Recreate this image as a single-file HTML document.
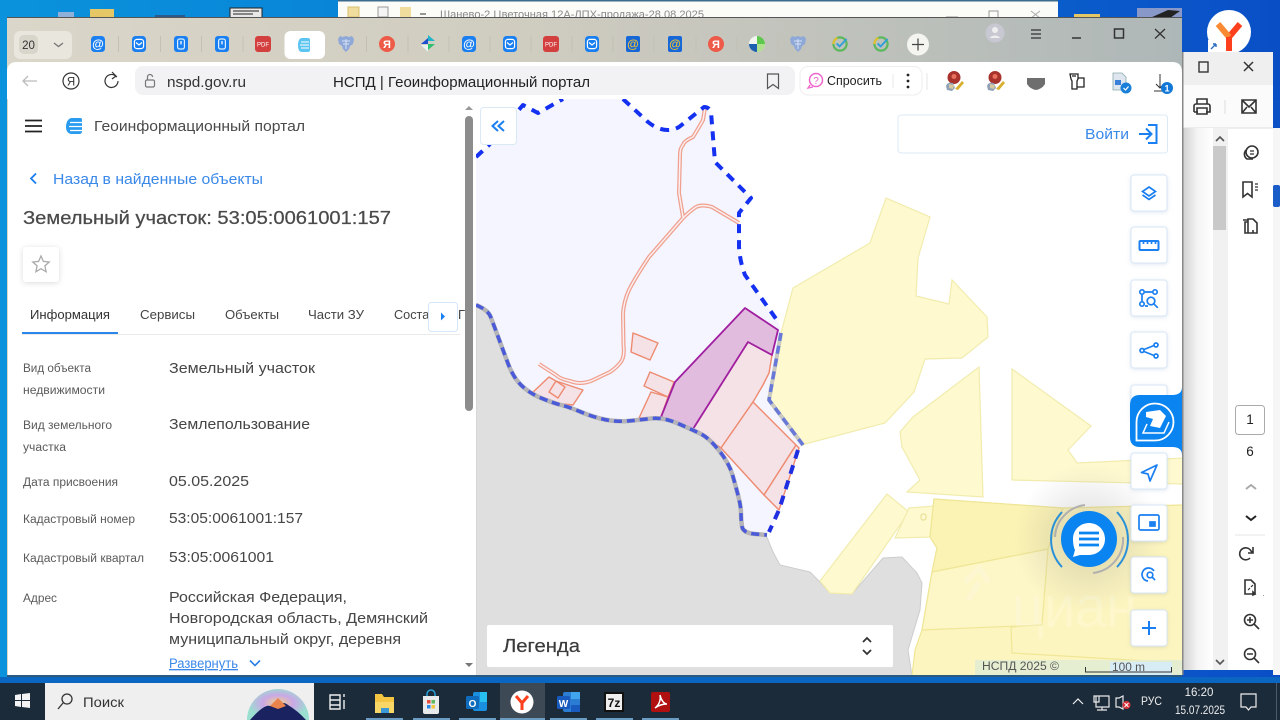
<!DOCTYPE html>
<html lang="ru"><head><meta charset="utf-8"><title>НСПД | Геоинформационный портал</title>
<style>
html,body{margin:0;padding:0;width:1280px;height:720px;overflow:hidden;background:#0a55c8}
svg{position:absolute;left:0;top:0;display:block}
text{font-family:"Liberation Sans","Noto Sans CJK SC",sans-serif}
</style></head><body>
<svg width="1280" height="720" viewBox="0 0 1280 720" xmlns="http://www.w3.org/2000/svg">
<defs>
<linearGradient id="desk" x1="0" x2="1" y1="0" y2="0"><stop offset="0" stop-color="#0a93dc"/><stop offset=".5" stop-color="#0878d4"/><stop offset="1" stop-color="#0a4ec6"/></linearGradient>
<linearGradient id="strip" x1="0" x2="1" y1="0" y2="0"><stop offset="0" stop-color="#dad6c9"/><stop offset=".45" stop-color="#cfccc0"/><stop offset="1" stop-color="#aeb7b7"/></linearGradient>
<linearGradient id="shade" x1="0" x2="1" y1="0" y2="0"><stop offset="0" stop-color="#cfcfcf"/><stop offset=".5" stop-color="#f4f4f4"/><stop offset="1" stop-color="#fff"/></linearGradient>
<radialGradient id="glow"><stop offset="0" stop-color="#777" stop-opacity=".28"/><stop offset=".55" stop-color="#888" stop-opacity=".14"/><stop offset="1" stop-color="#999" stop-opacity="0"/></radialGradient>
<radialGradient id="rainbow" cx=".5" cy=".45"><stop offset="0" stop-color="#f4d28a"/><stop offset=".5" stop-color="#c9a8e6"/><stop offset="1" stop-color="#9adfd0"/></radialGradient>
<symbol id="at" viewBox="0 0 14 16"><rect width="14" height="16" rx="3.5" fill="#1a7ff0"/><text x="7" y="12" font-size="12" font-weight="bold" fill="#fff" text-anchor="middle">@</text></symbol>
<symbol id="atg" viewBox="0 0 14 16"><rect width="14" height="16" rx="2" fill="#1668d8"/><text x="7" y="12" font-size="12" font-weight="bold" fill="#f2c02e" text-anchor="middle">@</text></symbol>
<symbol id="mail" viewBox="0 0 14 16"><rect width="14" height="16" rx="3.5" fill="#1a7ff0"/><rect x="2.4" y="3.400" width="9.200" height="9.200" rx="2.500" fill="none" stroke="#fff" stroke-width="1.200"/><path d="M4 6.500L7 9l3-2.500" fill="none" stroke="#fff" stroke-width="1.200"/></symbol>
<symbol id="excl" viewBox="0 0 14 16"><rect width="14" height="16" rx="3" fill="#1a7ff0"/><rect x="3.600" y="3" width="6.800" height="10" rx="2" fill="none" stroke="#dff0ff" stroke-width="1.200"/><path d="M7 5v3.400" stroke="#fff" stroke-width="1.300"/></symbol>
<symbol id="pdf" viewBox="0 0 16 16"><rect width="16" height="16" rx="3" fill="#d33f3f"/><text x="8" y="10.500" font-size="6" fill="#fff" text-anchor="middle">PDF</text></symbol>
<symbol id="ya" viewBox="0 0 16 16"><circle cx="8" cy="8" r="8" fill="#ee5a48"/><text x="8" y="12" font-size="11" font-weight="bold" fill="#fff" text-anchor="middle">Я</text></symbol>
<symbol id="star4" viewBox="0 0 16 18"><path d="M8 0L15 6H8z" fill="#20b4c8"/><path d="M8 9L1 9 8 3z" fill="#1c4fd0"/><path d="M8 9h7L8 15z" fill="#2cc070"/><path d="M1 10h7v7z" fill="#e8f2ee"/></symbol>
<symbol id="pie" viewBox="0 0 16 18"><circle cx="8" cy="9" r="8" fill="#f2f4f0"/><path d="M8 9V1a8 8 0 0 1 8 8z" fill="#5fc74e"/><path d="M8 9H0a8 8 0 0 0 8 8z" fill="#1c5fb0"/><path d="M8 9h8a8 8 0 0 1-8 8z" fill="#aee08e"/></symbol>
<symbol id="eagle" viewBox="0 0 16 18"><path d="M5 2l3-1 3 1 3-1 2 3-1 5-3 2-1 3-3 3-3-3-1-3-3-2L0 4l2-3z" fill="#8ea8d8"/><path d="M8 4v10M4 6h8M5 9h6" stroke="#d8e2f4" stroke-width="1"/></symbol>
<symbol id="chk" viewBox="0 0 16 18"><circle cx="8" cy="9" r="6.600" fill="none" stroke="#5cb85c" stroke-width="2.200"/><path d="M1.400 9a6.600 6.600 0 0 1 4-6" fill="none" stroke="#e0c030" stroke-width="2.200"/><path d="M4.600 8.400l3 3 7-7.400" fill="none" stroke="#2f9fd8" stroke-width="1.900"/></symbol>
<symbol id="fig" viewBox="0 0 20 20"><circle cx="10" cy="6.500" r="6.500" fill="#a8322c"/><circle cx="10" cy="5.500" r="2.500" fill="#e8705c"/><path d="M2 15q1-4 7-3l2 5-3 3-5-1z" fill="#8ea0b8"/><path d="M11 18l7-8 2 2-6 7z" fill="#d8b030"/><path d="M5 13l5 1-1 4-4-1z" fill="#d8c8a0"/></symbol>
</defs>

<!-- desktop -->
<rect width="1280" height="720" fill="url(#desk)"/>
<rect x="90" y="9" width="24" height="9" fill="#e6c766"/>
<rect x="58" y="12" width="16" height="6" fill="#8fb0d8"/>
<rect x="155" y="15" width="30" height="3" fill="#2a5a8c"/>
<rect x="230" y="8" width="32" height="10" fill="#e8e8e8" stroke="#222"/>
<path d="M233 11h26M233 14h20" stroke="#222"/>
<rect x="1137" y="8" width="45" height="10" fill="#8898c8"/><path d="M1150 18l18-8 12 1-10 7z" fill="#222"/>
<rect x="1074" y="14" width="26" height="5" fill="#e6c766"/>
<circle cx="1229" cy="32" r="22" fill="#fff"/>
<path d="M1229 37l11-13" stroke="#fc3f1d" stroke-width="6"/><path d="M1218 24l11 13" stroke="#f98a33" stroke-width="6"/><path d="M1229 37v14" stroke="#fc3f1d" stroke-width="6"/>
<rect x="1208" y="40" width="12" height="12" fill="#fff"/><path d="M1211 49l5-5m0 0h-3m3 0v3" stroke="#2a6fc0" stroke-width="1.400" fill="none"/>

<!-- doc window behind -->
<rect x="338" y="0" width="720" height="17" fill="#fbfbf8"/><rect x="338" y="0" width="720" height="1.500" fill="#3a6a8c"/>
<rect x="348" y="7" width="11" height="10" fill="#f0dc9c" stroke="#d8c070"/><rect x="378" y="7" width="10" height="10" fill="#f4f4f4" stroke="#999"/><rect x="400" y="7" width="11" height="10" fill="#f0dc9c"/>
<path d="M420 14h6" stroke="#333"/>
<text x="440" y="18" font-size="11" fill="#8a8a8a" textLength="264" lengthAdjust="spacingAndGlyphs">Шанево-2 Цветочная 12А-ЛПХ-продажа-28.08.2025</text>
<path d="M946 17h12" stroke="#999"/><rect x="989" y="11" width="9" height="7" fill="none" stroke="#999"/><path d="M1031 11l9 7m0-7l-9 7" stroke="#aaa"/>

<!-- right pdf window -->
<rect x="1273" y="128" width="7" height="547" fill="#f6f6f6"/><rect x="1273" y="185" width="7" height="22" rx="2" fill="#1a5cc8"/><rect x="1273" y="100" width="7" height="28" fill="#0c50c6"/>
<rect x="1182" y="52" width="91" height="618" fill="#fff"/>
<rect x="1182" y="52" width="91" height="33" fill="#efefef"/>
<rect x="1199" y="62" width="9" height="10" fill="none" stroke="#333" stroke-width="1.400"/>
<path d="M1244 62l9 9m0-9l-9 9" stroke="#333" stroke-width="1.500"/>
<rect x="1182" y="85" width="91" height="43" fill="#fbfbfb"/><path d="M1182 128h91" stroke="#dcdcdc"/>
<rect x="1182" y="128" width="31" height="542" fill="url(#shade)"/>
<rect x="1213" y="128" width="15" height="542" fill="#f1f1f1"/>
<rect x="1213" y="146" width="13" height="84" fill="#c9c9c9"/>
<path d="M1216 141l4-4 4 4M1216 660l4 4 4-4" fill="none" stroke="#555" stroke-width="1.600"/>
<path d="M1225 100v14" stroke="#ddd"/>
<g fill="none" stroke="#333" stroke-width="1.600">
<path d="M1197 104v-5h10v5M1194 112v-6a2 2 0 0 1 2-2h12a2 2 0 0 1 2 2v6h-4M1198 112h-4M1197 108h10v6h-10z"/>
<path d="M1242 100h14v13h-14zM1242 100l7 7 7-7M1242 113l5-6M1256 113l-5-6"/>
<circle cx="1252" cy="152" r="6"/><path d="M1246 150a6 6 0 0 0 1 9h6"/><path d="M1250 151h4M1250 154h4" stroke-width="1.200"/>
<path d="M1243 182h9v15l-4.500-3.500-4.500 3.500z"/><path d="M1255 184h3M1255 187h3M1255 190h3" stroke-width="1.200"/>
<path d="M1243 220h5v2h-3v11h8v-3M1248 219h5l4 4v10h-9z"/>
<path d="M1250 558a6 6 0 1 1 1-7l2 2M1253 547v6h-5"/>
<path d="M1245 580h6l4 4v10h-10z"/><path d="M1253 592l2 2-2 1z" fill="#333"/>
<path d="M1248 590l2-2m1-1l2-2" stroke-width="1.200"/>
<circle cx="1250" cy="620" r="5.500"/><path d="M1254 624l5 5M1247 620h6M1250 617v6"/>
<circle cx="1250" cy="654" r="5.500"/><path d="M1254 658l5 5M1247 654h6"/>
</g>
<rect x="1235.500" y="405.500" width="29" height="29" rx="3" fill="#fff" stroke="#aaa"/>
<text x="1250" y="424" font-size="13.500" fill="#222" text-anchor="middle">1</text>
<text x="1250" y="456" font-size="13.500" fill="#222" text-anchor="middle">6</text>
<path d="M1246 489l5-4 5 4" fill="none" stroke="#aaa" stroke-width="2"/>
<path d="M1246 516l5 4 5-4" fill="none" stroke="#222" stroke-width="2"/>
<path d="M1235 535h30" stroke="#e4e4e4"/>
<path d="M1263 596v-1h1z" fill="#333"/>

<!-- main browser window -->
<rect x="7" y="17" width="1175" height="658" fill="url(#strip)"/>
<rect x="7" y="17" width="1175" height="1" fill="#555"/>
<rect x="1182" y="52" width="1.500" height="623" fill="#888"/>

<!-- tab counter -->
<rect x="14" y="31" width="58" height="28" rx="6" fill="#e8e6dd"/>
<rect x="19" y="35" width="19" height="19" rx="5" fill="#d8d5cb"/>
<text x="28.500" y="49" font-size="11.500" fill="#333" text-anchor="middle">20</text>
<path d="M54 43l4.500 3.500 4.500-3.500" fill="none" stroke="#777" stroke-width="1.300"/>
<rect x="284.500" y="31" width="40.500" height="28" rx="6" fill="#fff"/>
<g stroke="#c3c1b6"><path d="M118.500 36v16M160.500 36v16M201.500 36v16M243 36v16M366.500 36v16M408 36v16M449 36v16M490 36v16M531 36v16M572 36v16M613 36v16M654 36v16M696 36v16M737 36v16M778 36v16M819 36v16M861 36v16M902 36v16" /></g>
<use href="#at" x="91" y="36" width="14" height="16"/>
<use href="#mail" x="132" y="36" width="14" height="16"/>
<use href="#excl" x="174" y="36" width="14" height="16"/>
<use href="#excl" x="215" y="36" width="14" height="16"/>
<use href="#pdf" x="255" y="36" width="16" height="16"/>
<path d="M302 38h6c1.500 0 2 1 2 2v10c0 1.500-1 2-2 2h-6c-3 0-4-3-4-7 0-5 2-7 4-7z" fill="#5cc4f0"/><path d="M301 42h8M300 45h9M301 48h8" stroke="#fff"/>
<use href="#eagle" x="338" y="35" width="16" height="18"/>
<use href="#ya" x="379" y="36" width="16" height="16"/>
<use href="#star4" x="420" y="35" width="16" height="18"/>
<use href="#at" x="462" y="36" width="14" height="16"/>
<use href="#mail" x="503" y="36" width="14" height="16"/>
<use href="#pdf" x="543" y="36" width="16" height="16"/>
<use href="#mail" x="585" y="36" width="14" height="16"/>
<use href="#atg" x="626" y="36" width="14" height="16"/>
<use href="#atg" x="668" y="36" width="14" height="16"/>
<use href="#ya" x="708" y="36" width="16" height="16"/>
<use href="#pie" x="749" y="35" width="16" height="18"/>
<use href="#eagle" x="790" y="35" width="16" height="18"/>
<use href="#chk" x="832" y="35" width="16" height="18"/>
<use href="#chk" x="873" y="35" width="16" height="18"/>
<circle cx="918" cy="44.500" r="11" fill="#f4f4f0"/><path d="M912 44.500h12M918 38.500v12" stroke="#444" stroke-width="1.200"/>
<!-- window controls -->
<circle cx="995" cy="33" r="9.500" fill="#c8c8d2"/><circle cx="995" cy="30" r="3" fill="#eee"/><path d="M989.500 38q5.500-5 11 0z" fill="#eee"/>
<path d="M1031 30h10M1031 34h10M1031 38h10" stroke="#333" stroke-width="1.200"/>
<path d="M1072 38h9" stroke="#555" stroke-width="2"/>
<rect x="1114.500" y="29" width="9" height="9" fill="none" stroke="#333" stroke-width="1.500"/>
<path d="M1155 29l10 9.500m0-9.500l-10 9.500" stroke="#333" stroke-width="1.300"/>

<!-- toolbar -->
<path d="M7 72q0-10 10-10h1155q10 0 10 10v27H7z" fill="#fff"/>
<path d="M37 81H23m5-5l-5 5 5 5" fill="none" stroke="#bbb" stroke-width="1.300"/>
<circle cx="71" cy="81" r="8" fill="none" stroke="#333" stroke-width="1.200"/><text x="71" y="85.500" font-size="11.500" fill="#333" text-anchor="middle">Я</text>
<path d="M118 81a6.500 6.500 0 1 1-3-5.500l2 1.500M112 72l4 4-4 3" fill="none" stroke="#333" stroke-width="1.200"/>
<rect x="135" y="66" width="660" height="29" rx="8" fill="#f2f2f4"/>
<rect x="145.500" y="80" width="9" height="7" rx="1.500" fill="none" stroke="#777" stroke-width="1.200"/><path d="M147.500 80v-3a2.500 2.500 0 0 1 5 0" fill="none" stroke="#777" stroke-width="1.200"/>
<text x="167" y="87" font-size="15" fill="#333" textLength="79" lengthAdjust="spacingAndGlyphs">nspd.gov.ru</text>
<text x="333" y="87" font-size="14.500" fill="#222" textLength="257" lengthAdjust="spacingAndGlyphs">НСПД | Геоинформационный портал</text>
<path d="M767.500 74h11v14.500l-5.500-4-5.500 4z" fill="none" stroke="#555" stroke-width="1.200"/>
<rect x="800" y="66.500" width="122" height="28.500" rx="8" fill="#fff" stroke="#eee"/>
<circle cx="816" cy="80" r="6.500" fill="#fff" stroke="#ee66cc" stroke-width="1.500"/><path d="M810 85l-2 3 5-1" fill="none" stroke="#ee66cc" stroke-width="1.300"/><text x="816" y="84" font-size="10" fill="#e060c0" text-anchor="middle">?</text>
<text x="827" y="85" font-size="12.500" fill="#222" textLength="55" lengthAdjust="spacingAndGlyphs">Спросить</text>
<path d="M893 74v14" stroke="#e8e8e8"/>
<circle cx="908" cy="75" r="1.400" fill="#222"/><circle cx="908" cy="81" r="1.400" fill="#222"/><circle cx="908" cy="87" r="1.400" fill="#222"/>
<path d="M927 73v17" stroke="#e6e6e6"/>
<use href="#fig" x="944" y="71" width="20" height="20"/>
<use href="#fig" x="985" y="71" width="20" height="20"/>
<path d="M1027 78h18v6q-3 5-9 6-6-1-9-6z" fill="#6e6e6e"/>
<g fill="none" stroke="#222" stroke-width="1.300"><path d="M1070 74h8v5l-1 2v8h-5v-8l-1-2zM1078 78h6v9h-7M1072 76h4"/></g>
<path d="M1113 73h9l4 4v13h-13z" fill="#dfe6f0" stroke="#8aa" stroke-width=".8"/><path d="M1115 80h6v5h-6z" fill="#3a7fd8"/>
<circle cx="1126" cy="88" r="5.500" fill="#1a7fd8"/><path d="M1123.500 88l2 2 3-3.500" fill="none" stroke="#fff" stroke-width="1.200"/>
<path d="M1160 74v13m-4-3l4 4 4-4M1154 91h8" fill="none" stroke="#333" stroke-width="1"/>
<circle cx="1167" cy="88" r="6" fill="#1278d8"/><text x="1167" y="91.500" font-size="9" font-weight="bold" fill="#fff" text-anchor="middle">1</text>

<!-- left panel -->
<rect x="8" y="99" width="468" height="576" fill="#fff"/>
<path d="M25 120.500h17M25 126h17M25 131.500h17" stroke="#222" stroke-width="1.800"/>
<path d="M72 118h8c2 0 2 1 2 3v10c0 2-1 3-3 3h-7c-4 0-6-3-6-7 0-6 3-9 6-9z" fill="#2a9cf0"/><path d="M70 122.500h12M69 126.500h13M70 130.500h12" stroke="#fff" stroke-width="1.200"/>
<text x="94" y="131" font-size="15" fill="#4a4a4a" textLength="211" lengthAdjust="spacingAndGlyphs">Геоинформационный портал</text>
<path d="M36 173.500l-5 5 5 5" fill="none" stroke="#1a7ff0" stroke-width="1.800"/>
<text x="53" y="184" font-size="15" fill="#3a88e8" textLength="210" lengthAdjust="spacingAndGlyphs">Назад в найденные объекты</text>
<text x="23" y="224" font-size="18.500" fill="#4a4a4a" stroke="#4a4a4a" stroke-width=".25" textLength="368" lengthAdjust="spacingAndGlyphs">Земельный участок: 53:05:0061001:157</text>
<rect x="23" y="247" width="36" height="35" rx="3" fill="#fff" style="filter:drop-shadow(0 1px 3px rgba(0,0,0,.14))"/>
<path d="M41 256l2.400 5.400 5.800.6-4.300 3.900 1.200 5.800-5.100-3-5.100 3 1.200-5.800-4.300-3.900 5.800-.6z" fill="none" stroke="#aaa" stroke-width="1.300"/>
<g font-size="13" fill="#444">
<text x="30" y="319" fill="#333" textLength="80" lengthAdjust="spacingAndGlyphs">Информация</text>
<text x="140" y="319" textLength="55" lengthAdjust="spacingAndGlyphs">Сервисы</text>
<text x="225" y="319" textLength="54" lengthAdjust="spacingAndGlyphs">Объекты</text>
<text x="308" y="319" textLength="56" lengthAdjust="spacingAndGlyphs">Части ЗУ</text>
<text x="394" y="319" textLength="42" lengthAdjust="spacingAndGlyphs">Состав</text>
<text x="458" y="319">Г</text>
</g>
<rect x="22" y="334" width="438" height="1" fill="#eaeaea"/>
<rect x="22" y="332" width="96" height="2" fill="#2a86e8"/>
<rect x="428.500" y="302.500" width="29" height="29" rx="3" fill="#fff" stroke="#d5e6f8"/>
<path d="M441 312.500l4 4-4 4z" fill="#1a7ff0"/>
<g font-size="11.500" fill="#5a5a5a">
<text x="23" y="372" textLength="68" lengthAdjust="spacingAndGlyphs">Вид объекта</text>
<text x="23" y="394" textLength="82" lengthAdjust="spacingAndGlyphs">недвижимости</text>
<text x="23" y="429" textLength="89" lengthAdjust="spacingAndGlyphs">Вид земельного</text>
<text x="23" y="451" textLength="43" lengthAdjust="spacingAndGlyphs">участка</text>
<text x="23" y="486" textLength="95" lengthAdjust="spacingAndGlyphs">Дата присвоения</text>
<text x="23" y="523" textLength="112" lengthAdjust="spacingAndGlyphs">Кадастровый номер</text>
<text x="23" y="562" textLength="121" lengthAdjust="spacingAndGlyphs">Кадастровый квартал</text>
<text x="23" y="602" textLength="34" lengthAdjust="spacingAndGlyphs">Адрес</text>
</g>
<g font-size="14.500" fill="#454545">
<text x="169" y="373" textLength="146" lengthAdjust="spacingAndGlyphs">Земельный участок</text>
<text x="169" y="429" textLength="141" lengthAdjust="spacingAndGlyphs">Землепользование</text>
<text x="169" y="486" textLength="80" lengthAdjust="spacingAndGlyphs">05.05.2025</text>
<text x="169" y="523" textLength="134" lengthAdjust="spacingAndGlyphs">53:05:0061001:157</text>
<text x="169" y="562" textLength="105" lengthAdjust="spacingAndGlyphs">53:05:0061001</text>
<text x="169" y="602" textLength="178" lengthAdjust="spacingAndGlyphs">Российская Федерация,</text>
<text x="169" y="623" textLength="259" lengthAdjust="spacingAndGlyphs">Новгородская область, Демянский</text>
<text x="169" y="644" textLength="232" lengthAdjust="spacingAndGlyphs">муниципальный округ, деревня</text>
</g>
<text x="169" y="668" font-size="13.500" fill="#3a88e8" textLength="69" lengthAdjust="spacingAndGlyphs" text-decoration="underline">Развернуть</text>
<path d="M250 660.500l5 5 5-5" fill="none" stroke="#2a80e8" stroke-width="1.600"/>
<rect x="465" y="116" width="8" height="295" rx="4" fill="#8c8c8c"/>
<path d="M465 110l4-4 4 4z" fill="#999"/><path d="M465 663h8l-4 4z" fill="#777"/>

<!-- map -->
<svg x="476" y="99" width="706" height="576" viewBox="476 99 706 576">
<rect x="476" y="99" width="706" height="576" fill="#fff"/>
<polygon fill="#f4f5ff" points="476,157 489,145 523,105 538,113 563,99 623,99 648,122 663,130 679,127 704,107 711,112 715,162 751,198 739,213 739,247 743,272 779,323 781,333 769,400 803,445 798,450 779,510 769,532 743,533 741,520 741,507 736,487 729,463 709,438 693,430 663,417 639,420 616,422 593,417 569,407 553,403 529,393 513,377 503,350 493,323 488,310 476,305"/>
<!-- grey land -->
<path fill="#dfdfdf" stroke="#cdcdcd" d="M476 305Q488 310 490.500 316.500Q493 323 498 336.500Q503 350 508 363.500Q513 377 521 385Q529 393 541 398Q553 403 561 405Q569 407 581 412Q593 417 604.500 419.500Q616 422 627.500 421Q639 420 651 418.500Q663 417 678 423.500Q693 430 701 434Q709 438 719 450.500Q729 463 732.500 475Q736 487 738.500 497Q741 507 741 513.500Q741 520 742 526.500Q743 533 755 534L766 535 773 552 780 565 810 572 820 582 830 593 852 594 883 558 902 557 917 573 922 583 920 610 908 650 912 676H476z"/>
<!-- yellows -->
<g fill="#fff9cf" stroke="#f1ecae" stroke-width="1.200">
<polygon points="886,198 930,217 918,258 916,296 949,304 952,280 987,317 988,337 962,358 925,359 914,392 885,423 805,444 803,445 769,400 781,333 793,288 870,243"/>
<polygon points="979,367 983,497 907,492 920,480 902,447 900,432 913,417"/>
<polygon points="1012,369 1091,426 1068,450 1077,463 1183,458 1183,484 1012,480"/>
<polygon points="887,494 909,512 852,594 830,593 820,581"/>
<polygon points="909,508 934,506 930,537 895,538"/>
<rect x="921" y="514" width="5" height="6" rx="2" fill="none" stroke="#e8e09a"/>
</g>
<polygon fill="#fdf5bf" stroke="#efe696" stroke-width="1.200" points="934,499 1063,508 1183,505 1183,676 912,676 915,650 922,630 932,572 937,548 930,537"/>
<polygon fill="#fbf3b4" stroke="#efe696" stroke-width="1.200" points="934,499 1063,508 1048,549 932,572 937,548 930,537"/>
<polygon fill="#fdf6c6" stroke="#efe696" stroke-width="1.200" points="932,572 1048,549 1042,625 922,630"/>
<path d="M1011,627l1,26 170,10M1042,625l-31,2" fill="none" stroke="#efe696" stroke-width="1.200"/>
<text x="1012" y="627" font-size="58" fill="#fff" fill-opacity=".2" textLength="125" lengthAdjust="spacingAndGlyphs">циан</text>
<path d="M965 582l14-14 10 14M968 600l11-18" fill="none" stroke="#fff" stroke-opacity=".2" stroke-width="6"/>
<!-- parcels -->
<g fill="#f5e2e6" stroke="#ee8a70" stroke-width="1.400" stroke-linejoin="round">
<polygon points="633,333 658,343 650,360 631,352"/>
<polygon points="651,392 668,397 661,417 639,418"/>
<polygon points="650,372 674,382 668,397 644,386"/>
<polygon points="549,377 556,381 583,390 573,405 553,403 531,394"/>
<polygon points="556,381 565,387 558,398 549,392"/>
<polygon points="748,342 772,355 769,373 763,385 753,402 721,448 693,429"/>
<polygon points="753,402 796,445 764,495 721,448"/>
<polygon points="796,445 799,448 779,510 764,495"/>
</g>
<polygon fill="#e2bcdf" stroke="#a01fa0" stroke-width="1.800" stroke-linejoin="round" points="745,308 778,330 772,355 748,342 693,429 661,417 675,382"/>
<!-- road -->
<g fill="none" stroke-linejoin="round" stroke-linecap="butt">
<path d="M705 108L703 120Q698 129 693 137Q684 141 683 145Q680 148 680 155L679 193L683 217M739 223L712 207Q702 204 696 207Q690 211 683 218L649 257Q635 278 629 290Q624 301 623 313L623.500 345Q625 358 620 363Q616 368 610 372L591 381Q580 385 570 381Q560 379 556 375L539 364" stroke="#f0a08e" stroke-width="4"/>
<path d="M705 108L703 120Q698 129 693 137Q684 141 683 145Q680 148 680 155L679 193L683 217M739 223L712 207Q702 204 696 207Q690 211 683 218L649 257Q635 278 629 290Q624 301 623 313L623.500 345Q625 358 620 363Q616 368 610 372L591 381Q580 385 570 381Q560 379 556 375L539 364" stroke="#faeef0" stroke-width="1.500"/>
</g>
<!-- boundary -->
<g fill="none" stroke-linejoin="round">
<path d="M476 305Q488 310 490.500 316.500Q493 323 498 336.500Q503 350 508 363.500Q513 377 521 385Q529 393 541 398Q553 403 561 405Q569 407 581 412Q593 417 604.500 419.500Q616 422 627.500 421Q639 420 651 418.500Q663 417 678 423.500Q693 430 701 434Q709 438 719 450.500Q729 463 732.500 475Q736 487 738.500 497Q741 507 741 513.500Q741 520 742 526.500Q743 533 755 534L767 535" stroke="#b4b4b8" stroke-width="4.500"/>
<path d="M476 305Q488 310 490.500 316.500Q493 323 498 336.500Q503 350 508 363.500Q513 377 521 385Q529 393 541 398Q553 403 561 405Q569 407 581 412Q593 417 604.500 419.500Q616 422 627.500 421Q639 420 651 418.500Q663 417 678 423.500Q693 430 701 434Q709 438 719 450.500Q729 463 732.500 475Q736 487 738.500 497Q741 507 741 513.500Q741 520 742 526.500Q743 533 755 534L767 535" stroke="#4a5ad8" stroke-width="3.500" stroke-dasharray="8 5"/>
<path d="M781 333L769 400 803 445" stroke="#c8c8c0" stroke-width="4"/>
<path d="M781 333L769 400 803 445" stroke="#6878d8" stroke-width="3.500" stroke-dasharray="8 5"/>
<path d="M476 157L489 145 523 105 538 113 563 99M623 99L648 122Q658 130 668 130Q674 130 679 127L704 107Q709 107 711 112L715 162 751 198 739 213 739 247Q740 262 745 275L779 323" stroke="#1430f0" stroke-width="4" stroke-dasharray="9 7"/>
<path d="M798 450L779 510 769 532" stroke="#1e2ee0" stroke-width="4" stroke-dasharray="9 7"/>
</g>
<!-- attribution -->
<rect x="975" y="660" width="207" height="15" fill="#e0ecd4" fill-opacity=".85"/>
<rect x="1110" y="662" width="62" height="13" fill="#d8ecf6"/>
<text x="982" y="670" font-size="11.500" fill="#555" textLength="77" lengthAdjust="spacingAndGlyphs">НСПД 2025 ©</text>
<text x="1112" y="671" font-size="11.500" fill="#555" textLength="33" lengthAdjust="spacingAndGlyphs">100 m</text>
<path d="M1085.500 667v5h86v-5" fill="none" stroke="#333"/>
<!-- glow + chat -->
<circle cx="1089" cy="539" r="75" fill="url(#glow)"/>
<g fill="none" stroke-width="2">
<path d="M1062 512A40 40 0 0 0 1062 567M1117 512A40 40 0 0 1 1117 567" stroke="#2a90d8"/>
<path d="M1085 505A34 34 0 0 0 1055 537M1123 537A34 34 0 0 1 1093 573" stroke="#b0b0b0"/>
</g>
<circle cx="1089" cy="539" r="28" fill="#0a84f0"/>
<path d="M1089 523c9 0 16 7 16 16s-7 16-16 16h-9l-7 2 2-7c-1.500-3-2-7-2-11 0-9 7-16 16-16z" fill="#fff"/>
<path d="M1079 533h20M1079 539h20M1079 545h20" stroke="#0a84f0" stroke-width="2.800"/>
<!-- top-left collapse -->
<rect x="480.500" y="107.500" width="36" height="37" rx="3" fill="#fff" stroke="#dbe8f6"/>
<path d="M498 121l-5.500 5 5.500 5M504 121l-5.500 5 5.500 5" fill="none" stroke="#1a7ff0" stroke-width="2"/>
<!-- login -->
<rect x="898" y="115" width="269.500" height="38" rx="3" fill="#fff" stroke="#dbe8f6"/>
<text x="1085" y="139" font-size="15" fill="#3a88e8" textLength="44" lengthAdjust="spacingAndGlyphs">Войти</text>
<path d="M1139 134h12m-5-5.500l5.500 5.500-5.500 5.500M1148 125h8.500v18H1148" fill="none" stroke="#1a7ff0" stroke-width="2"/>
<!-- legend -->
<rect x="487" y="625" width="406" height="42" rx="2" fill="#fff"/>
<text x="503" y="652" font-size="18.500" fill="#3a3a3a" stroke="#3a3a3a" stroke-width=".2" textLength="77" lengthAdjust="spacingAndGlyphs">Легенда</text>
<path d="M863 642l4-4 4 4M863 650l4 4 4-4" fill="none" stroke="#333" stroke-width="1.800"/>
<!-- tool buttons -->
<g fill="#fff" stroke="#d8e6f6" style="filter:drop-shadow(0 1px 2px rgba(0,60,130,.12))">
<rect x="1131" y="175" width="36" height="36" rx="3"/>
<rect x="1131" y="227" width="36" height="36" rx="3"/>
<rect x="1131" y="280" width="36" height="36" rx="3"/>
<rect x="1131" y="332" width="36" height="36" rx="3"/>
<rect x="1131" y="385" width="36" height="36" rx="3"/>
<rect x="1131" y="453" width="36" height="36" rx="3"/>
<rect x="1131" y="505" width="36" height="36" rx="3"/>
<rect x="1131" y="557" width="36" height="36" rx="3"/>
<rect x="1131" y="610" width="36" height="36" rx="3"/>
</g>
<g fill="none" stroke="#1a7ff0" stroke-width="1.700">
<path d="M1149 187l6.500 4.500-6.500 4.500-6.500-4.500zM1142.500 195l6.500 4.500 6.500-4.500"/>
<rect x="1139.500" y="241" width="19" height="9" rx="1" stroke-width="2"/><path d="M1143.500 241v3M1147.500 241v3M1151.500 241v3M1155.500 241v3"/>
<circle cx="1142" cy="292" r="2.200"/><circle cx="1155" cy="292" r="2.200"/><circle cx="1142" cy="304" r="2.200"/><circle cx="1151" cy="301" r="3.800"/><path d="M1153.800 303.800l4 4M1145 292h7M1142 295v6M1145 306h3"/>
<circle cx="1156" cy="345" r="2"/><circle cx="1156" cy="356" r="2"/><circle cx="1142" cy="350.500" r="2"/><path d="M1144 349.500l10-4M1144 351.500l10 4"/>
<path d="M1157 465l-15.500 7.500 6.500 1.500 2 7z" stroke-linejoin="round"/>
<rect x="1139" y="515" width="20" height="15" rx="1.500"/><rect x="1150" y="522" width="5" height="4" fill="#1a7ff0"/>
<path d="M1154 571a6.500 6.500 0 1 0-6 10" /><circle cx="1150" cy="575" r="2.800"/><path d="M1152 577l3 3"/>
<path d="M1149 621v14M1142 628h14" stroke-width="2"/>
</g>
<!-- blue widget -->
<path d="M1182 387q0 8-10 8h-32q-10 0-10 10v32q0 10 10 10h32q10 0 10 8z" fill="#0a84f0"/>
<path d="M1155 403.500a18.500 18.500 0 0 1 0 37h-18.500v-18.500a18.500 18.500 0 0 1 18.500-18.500z" fill="none" stroke="#fff" stroke-width="1.800"/>
<path d="M1146 412l14-2 6 6-6 12-10-2 3-7-7-2z" fill="#fff"/>
<path d="M1147 424l-4 9h21l5-11" fill="none" stroke="#fff" stroke-width="1.500"/>
</svg>
<rect x="7" y="675" width="1175" height="2" fill="#0a5aa4"/>

<!-- taskbar -->
<rect x="0" y="683" width="1280" height="37" fill="#1b2b3a"/>
<rect x="0" y="677" width="1280" height="6" fill="#0a66c0"/>
<rect x="7" y="675" width="1175" height="2" fill="#2a5a80"/>
<g fill="#f4f4f4"><path d="M15 695l6-1v6h-6zM22 694l8-1v7h-8zM15 701h6v6l-6-1zM22 701h8v7l-8-1z"/></g>
<rect x="45" y="683" width="269" height="37" fill="#efefef"/>
<circle cx="67" cy="699" r="5" fill="none" stroke="#333" stroke-width="1.300"/><path d="M63 703l-5 6" stroke="#333" stroke-width="1.300"/>
<text x="83" y="707" font-size="14" fill="#333" textLength="41" lengthAdjust="spacingAndGlyphs">Поиск</text>
<path d="M247 720a31 31 0 0 1 62 0z" fill="url(#rainbow)"/>
<path d="M250 720q14-16 20-14 6-3 9-1 4-4 9 0 10 6 18 15z" fill="#1a2360"/>
<path d="M270 706l8-8 8 8-8 3z" fill="#e8844c"/>
<g fill="none" stroke="#eee" stroke-width="1.400"><path d="M330 695h10v14h-10zM330 700h10M330 705h10M344 694v3M344 700v9"/></g>
<path d="M375 694h7l2 3h10v16h-19z" fill="#f4c542"/><path d="M375 702h19v11h-19z" fill="#f8d766"/><rect x="381" y="708" width="8" height="5" fill="#3a9ad8"/>
<path d="M423 696h16v16a2 2 0 0 1-2 2h-12a2 2 0 0 1-2-2z" fill="#e8eaec"/><path d="M427 696v-2a4 4 0 0 1 8 0v2" fill="none" stroke="#29a0d8" stroke-width="1.500"/>
<rect x="427" y="700" width="3.500" height="3.500" fill="#e74c3c"/><rect x="431.500" y="700" width="3.500" height="3.500" fill="#5cb85c"/><rect x="427" y="705" width="3.500" height="3.500" fill="#2a86e8"/><rect x="431.500" y="705" width="3.500" height="3.500" fill="#f4c542"/>
<rect x="473" y="692" width="14" height="19" rx="2" fill="#1a8fe0"/><path d="M480 692h7v10h-7z" fill="#28c0f0"/><rect x="466" y="696" width="13" height="13" rx="1.500" fill="#0f6cbd"/><text x="472.500" y="707" font-size="10" font-weight="bold" fill="#fff" text-anchor="middle">O</text>
<rect x="500" y="683" width="45" height="37" fill="#3d4a56"/>
<circle cx="522" cy="702" r="11.500" fill="#fff"/><path d="M516 696l6 7 6-7M522 703v7" fill="none" stroke="#fc3f1d" stroke-width="3"/>
<rect x="563" y="692" width="17" height="20" rx="2" fill="#2b7cd3"/><path d="M571 692h9v7h-9z" fill="#41a5ee"/><path d="M571 705h9v7h-9z" fill="#185abd"/><rect x="557" y="696" width="13" height="13" rx="1.500" fill="#185abd"/><text x="563.500" y="707" font-size="10" font-weight="bold" fill="#fff" text-anchor="middle">W</text>
<rect x="604" y="692" width="20" height="20" fill="#111"/><rect x="606" y="694" width="16" height="16" fill="#eee"/><text x="614" y="707" font-size="12" font-weight="bold" fill="#111" text-anchor="middle">7z</text>
<rect x="651" y="692" width="19" height="20" rx="2" fill="#b01010"/><path d="M655 708c4-3 6-8 5-13 1 5 4 9 7 9-4 0-8 1-12 4z" fill="none" stroke="#fff" stroke-width="1.500"/>
<g fill="#6a9cc4"><rect x="366" y="718" width="37" height="2"/><rect x="413" y="718" width="37" height="2"/><rect x="459" y="718" width="37" height="2"/><rect x="500" y="718" width="45" height="2"/><rect x="550" y="718" width="37" height="2"/><rect x="596" y="718" width="37" height="2"/><rect x="642" y="718" width="37" height="2"/></g>
<path d="M1073 704l5-5 5 5" fill="none" stroke="#eee" stroke-width="1.200"/>
<g fill="none" stroke="#e8e8e8" stroke-width="1.200"><path d="M1096 696h13v11h-13zM1102 707v3h-5h10M1094 696h5v6h-5z"/><path d="M1116 698h3l4-2v13l-4-2h-3z"/></g>
<circle cx="1126.500" cy="705" r="4" fill="#d8303a"/><path d="M1124.500 703l4 4m0-4l-4 4" stroke="#fff"/>
<text x="1141" y="705" font-size="11.500" fill="#eee" textLength="21" lengthAdjust="spacingAndGlyphs">РУС</text>
<text x="1199" y="696" font-size="11.500" fill="#eee" text-anchor="middle">16:20</text>
<text x="1175" y="714" font-size="11.500" fill="#eee" textLength="50" lengthAdjust="spacingAndGlyphs">15.07.2025</text>
<path d="M1241 694h15v13h-5l-2.500 3-2.500-3h-5z" fill="none" stroke="#eee" stroke-width="1.200"/>
<path d="M1276.500 683v37" stroke="#4a5a68"/>
</svg>
</body></html>
